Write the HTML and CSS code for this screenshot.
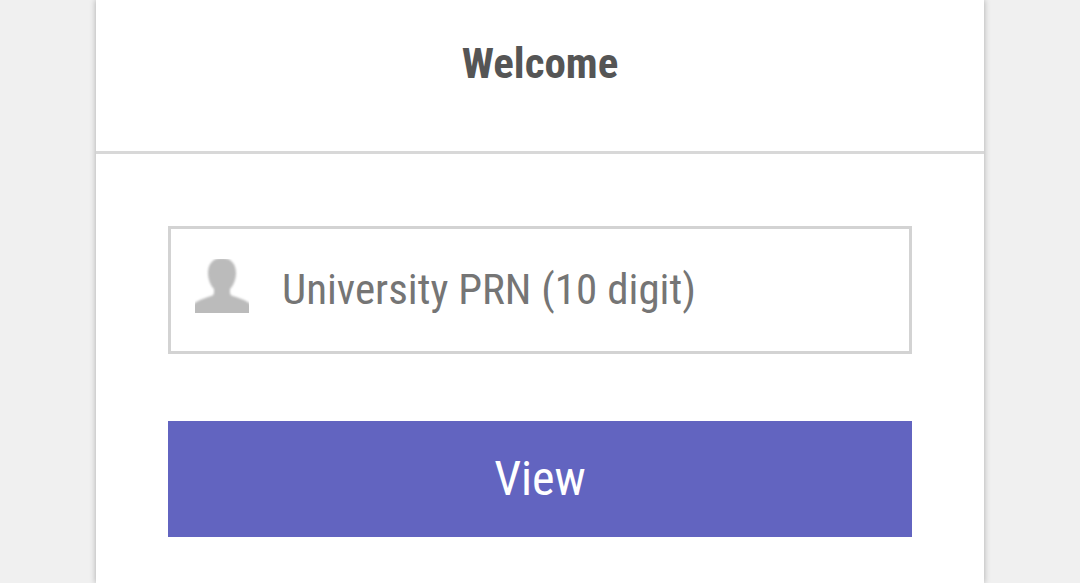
FILE: index.html
```html
<!DOCTYPE html>
<html lang="en">
<head>
<meta charset="utf-8">
<meta name="viewport" content="width=device-width, initial-scale=1">
<title>Welcome</title>
<link rel="stylesheet" href="styles.css">
</head>
<body>
<main class="card">
  <header class="card-header"><h1 class="title">Welcome</h1></header>
  <form class="form">
    <label class="field">
      <svg class="user-icon" viewBox="0 0 54 54" aria-hidden="true"><path d="M27 -1C18 -1 13 5 13 14C13 21 16 27 19 30V34C19 36 17 37 13 38L5 41C1 43 -1 44 -3 48V58H57V48C55 44 53 43 49 41L41 38C37 37 35 36 35 34V30C38 27 41 21 41 14C41 5 36 -1 27 -1Z"/></svg>
      <input class="field-input" type="text" aria-label="University PRN" placeholder="University PRN (10 digit)">
    </label>
    <button class="view-button" type="submit">View</button>
  </form>
</main>
</body>
</html>
```
FILE: styles.css
```css
* { box-sizing: border-box; }
body {
  margin: 0;
  min-height: 100vh;
  display: flex;
  padding: 0 96px;
  background: #f0f0f0;
  font-family: "Roboto Condensed", Roboto, sans-serif;
}
.card {
  flex: 1;
  background: #fff;
  box-shadow: 0 0 6px rgba(0, 0, 0, 0.3);
}
.card-header {
  padding: 36px 24px 60px;
  border-bottom: 3px solid #d8d8d8;
  text-align: center;
}
.title {
  margin: 0;
  font-size: 43px;
  line-height: 55px;
  color: #555;
}
.form { padding: 72px 72px 46px; }
.field {
  display: flex;
  align-items: center;
  gap: 33px;
  height: 128px;
  padding: 0 24px 8px;
  border: 3px solid #d3d3d3;
}
.user-icon {
  flex: none;
  width: 54px;
  height: 54px;
  fill: #bbb;
  overflow: hidden;
}
.user-icon path { filter: blur(1px); }
.field-input {
  flex: 1;
  min-width: 0;
  padding: 6px 0 0;
  border: 0;
  outline: 0;
  background: none;
  font: inherit;
  font-size: 43px;
  color: #555;
}
.field-input::placeholder { color: #757575; }
.view-button {
  display: block;
  width: 100%;
  margin-top: 67px;
  padding: 30px;
  border: 0;
  background: #6264c0;
  font: inherit;
  font-size: 48px;
  line-height: 56px;
  color: #fff;
}
```
